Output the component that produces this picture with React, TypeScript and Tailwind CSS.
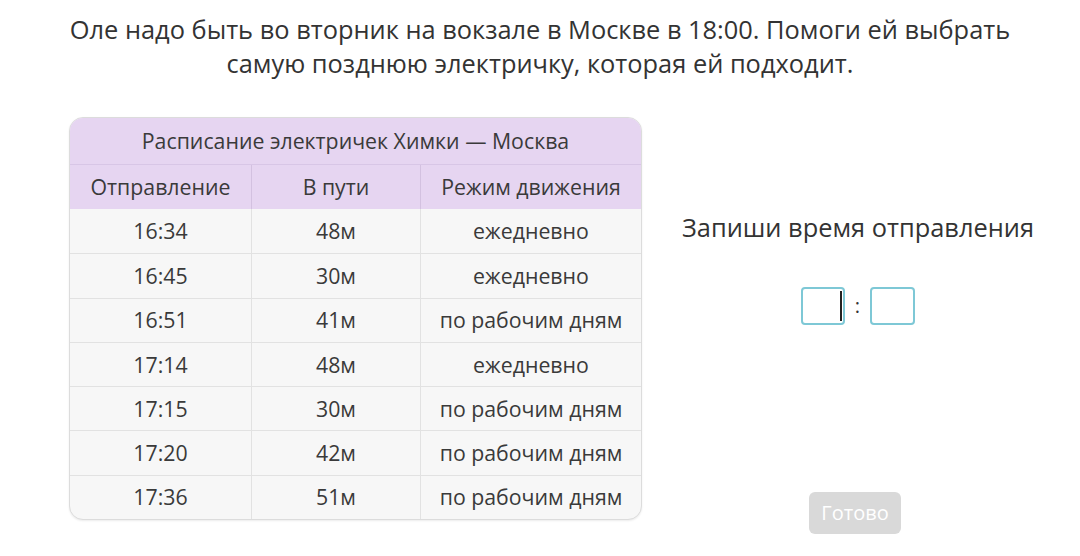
const rows = [
  ["16:34", "48м", "ежедневно"],
  ["16:45", "30м", "ежедневно"],
  ["16:51", "41м", "по рабочим дням"],
  ["17:14", "48м", "ежедневно"],
  ["17:15", "30м", "по рабочим дням"],
  ["17:20", "42м", "по рабочим дням"],
  ["17:36", "51м", "по рабочим дням"],
];

const ScheduleTable = () => (
  <div className="w-[573px] overflow-hidden rounded-[14px] border border-[#dcdcdc] bg-[#f7f7f7] shadow-[0_1px_2px_rgba(0,0,0,0.08)]">
    <div className="flex h-[46px] items-center justify-center bg-[#e6d5f1] text-[21.3px] text-[#3a3a3a]">
      Расписание электричек Химки — Москва
    </div>
    <div className="grid h-[45px] grid-cols-[182px_169px_1fr] border-t border-[#d8c6e6] bg-[#e6d5f1] text-[21.3px] text-[#3a3a3a]">
      <div className="flex items-center justify-center border-r border-[#d3c1e0]">Отправление</div>
      <div className="flex items-center justify-center border-r border-[#d3c1e0]">В пути</div>
      <div className="flex items-center justify-center">Режим движения</div>
    </div>
    {rows.map((r, i) => (
      <div
        key={`row-${i}`}
        className={`grid h-[44.3px] grid-cols-[182px_169px_1fr] text-[21.3px] text-[#3a3a3a] ${i > 0 ? "border-t border-[#e2e2e2]" : ""}`}
      >
        <div className="flex items-center justify-center border-r border-[#e2e2e2]">{r[0]}</div>
        <div className="flex items-center justify-center border-r border-[#e2e2e2]">{r[1]}</div>
        <div className="flex items-center justify-center">{r[2]}</div>
      </div>
    ))}
  </div>
);

export default function App() {
  return (
    <div
      className="h-[556px] w-[1080px] bg-white"
      style={{ fontFamily: '"Open Sans", "Noto Sans", sans-serif' }}
    >
      <div className="pt-[12px] text-center text-[25.4px] leading-[34px] text-[#333]">
        <p>Оле надо быть во вторник на вокзале в Москве в 18:00. Помоги ей выбрать</p>
        <p>самую позднюю электричку, которая ей подходит.</p>
      </div>
      <div className="mt-[37px] flex items-start pl-[69px]">
        <ScheduleTable />
        <div className="flex flex-1 flex-col items-center pr-[6px]">
          <div className="mt-[91px] text-[25.4px] text-[#333]">Запиши время отправления</div>
          <div className="mt-[41px] flex items-center gap-[10px]">
            <div className="relative h-[38px] w-[44px] rounded-[4px] border-2 border-[#7ec8d6]">
              <span className="absolute right-[1px] top-[2px] h-[30px] w-[2px] bg-[#222]" />
            </div>
            <span className="text-[20px] leading-none text-[#333]">:</span>
            <div className="h-[38px] w-[45px] rounded-[4px] border-2 border-[#7ec8d6]" />
          </div>
          <button className="mr-[6px] mt-[167px] h-[42px] w-[92px] rounded-[6px] bg-[#d9d9d9] text-[20px] text-white">
            Готово
          </button>
        </div>
      </div>
    </div>
  );
}
